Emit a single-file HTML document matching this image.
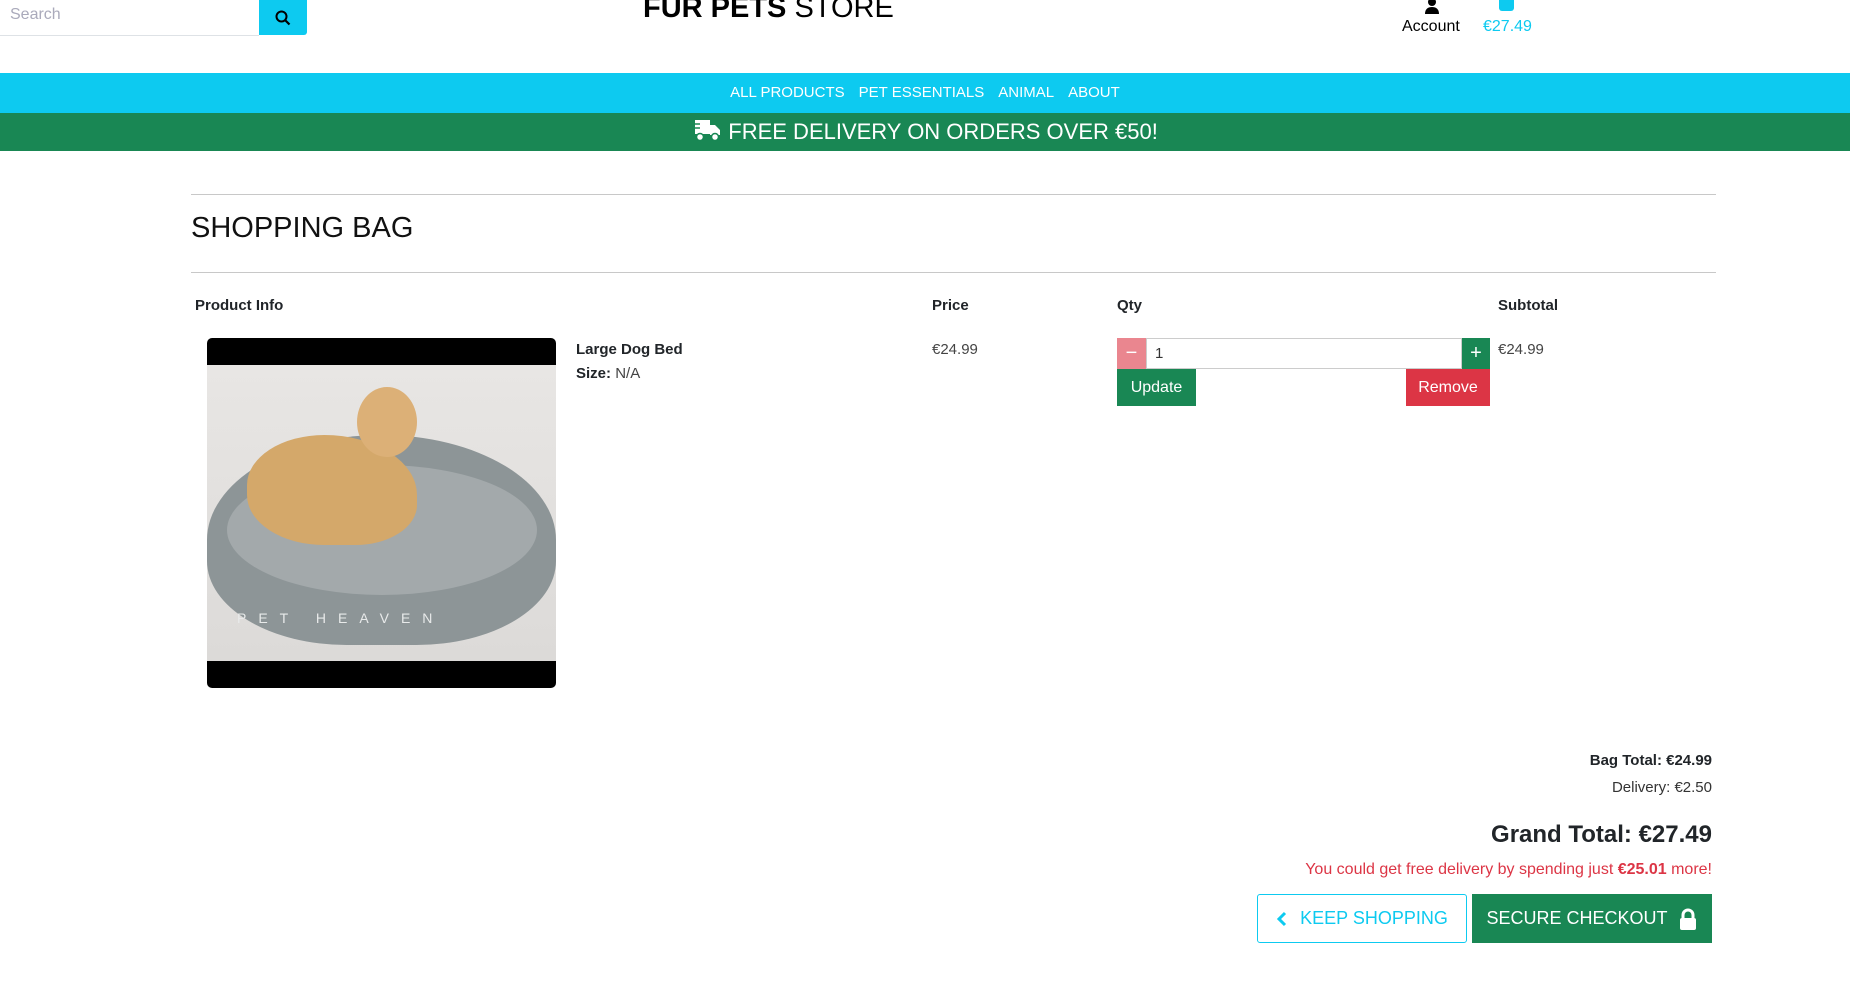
<!DOCTYPE html>
<html><head><meta charset="utf-8"><style>
*{box-sizing:border-box;margin:0;padding:0}
body{width:1850px;height:982px;overflow:hidden;background:#fff;font-family:"Liberation Sans",sans-serif;color:#212529;position:relative}
.a{position:absolute}
.btn{position:absolute;display:flex;align-items:center;justify-content:center;color:#fff}
</style></head><body>
<div class="a" style="left:0;top:0;width:259px;height:36px;border-bottom:1px solid #dee2e6;font-size:16px;color:#aab;padding:6px 10px">Search</div>
<div class="btn" style="left:259px;top:0;width:48px;height:35px;background:#0dcaf0;border-radius:0 0 3px 0">
<svg width="16" height="16" viewBox="0 0 16 16"><circle cx="6.5" cy="6.5" r="5" fill="none" stroke="#000" stroke-width="2"/><path d="M10 10l4.5 4.5" stroke="#000" stroke-width="2.2"/></svg></div>
<div class="a" style="left:643px;top:-8px;font-size:29px;color:#000;white-space:nowrap"><b>FUR PETS</b> STORE</div>
<svg class="a" style="left:1423px;top:0" width="18" height="14" viewBox="0 0 18 14"><circle cx="9" cy="2" r="4"/><path d="M2 14c0-5 3-7 7-7s7 2 7 7z"/></svg>
<div class="a" style="left:1402px;top:18px;font-size:16px;color:#000">Account</div>
<div class="a" style="left:1499px;top:0;width:15px;height:11px;background:#0dcaf0;border-radius:0 0 3px 3px"></div>
<div class="a" style="left:1483px;top:18px;font-size:16px;color:#0dcaf0">€27.49</div>
<div class="a" style="left:0;top:73px;width:1850px;height:40px;background:#0dcaf0;color:#fff;font-size:15px;text-align:center;line-height:40px"><span style="margin:0 7px">ALL PRODUCTS</span><span style="margin:0 7px">PET ESSENTIALS</span><span style="margin:0 7px">ANIMAL</span><span style="margin:0 7px">ABOUT</span></div>
<div class="a" style="left:0;top:113px;width:1850px;height:38px;background:#198754;color:#fff;font-size:22px;text-align:center;line-height:38px">
<svg width="30" height="24" viewBox="0 0 30 24" style="vertical-align:-3px"><path d="M3 2h15v14H3zM18 7h5l5 5v5H18z" fill="#fff"/><circle cx="8" cy="19" r="3.5" fill="#fff" stroke="#198754" stroke-width="1.5"/><circle cx="23" cy="19" r="3.5" fill="#fff" stroke="#198754" stroke-width="1.5"/><path d="M0 6h8M0 10h8" stroke="#198754" stroke-width="1.5"/></svg> FREE DELIVERY ON ORDERS OVER €50!</div>
<div class="a" style="left:191px;top:194px;width:1525px;height:1px;background:#c8c8c8"></div>
<div class="a" style="left:191px;top:212px;font-size:29px;color:#111">SHOPPING BAG</div>
<div class="a" style="left:191px;top:272px;width:1525px;height:1px;background:#c8c8c8"></div>
<div class="a" style="left:195px;top:297px;font-size:15px;font-weight:bold">Product Info</div>
<div class="a" style="left:932px;top:297px;font-size:15px;font-weight:bold">Price</div>
<div class="a" style="left:1117px;top:297px;font-size:15px;font-weight:bold">Qty</div>
<div class="a" style="left:1498px;top:297px;font-size:15px;font-weight:bold">Subtotal</div>
<div class="a" style="left:207px;top:338px;width:349px;height:350px;background:#000;border-radius:5px;overflow:hidden">
<div class="a" style="left:0;top:27px;width:349px;height:296px;background:linear-gradient(#e8e6e4,#dcdad8)">
<div class="a" style="left:0;top:70px;width:349px;height:210px;border-radius:50% 50% 40% 40%;background:#8d9597"></div>
<div class="a" style="left:20px;top:100px;width:310px;height:130px;border-radius:50%;background:#a3a9ab"></div>
<div class="a" style="left:40px;top:70px;width:170px;height:110px;border-radius:50% 60% 40% 50%;background:#d4a86a"></div>
<div class="a" style="left:150px;top:22px;width:60px;height:70px;border-radius:50%;background:#dcb077"></div>
<div class="a" style="left:30px;top:245px;font-size:14px;color:#e8eaea;letter-spacing:12px">PET HEAVEN</div>
</div></div>
<div class="a" style="left:576px;top:341px;font-size:15px;font-weight:bold">Large Dog Bed</div>
<div class="a" style="left:576px;top:365px;font-size:15px"><b>Size:</b> <span style="color:#444">N/A</span></div>
<div class="a" style="left:932px;top:341px;font-size:15px;color:#444">€24.99</div>
<div class="btn" style="left:1117px;top:338px;width:29px;height:31px;background:#ea868f;font-size:20px">−</div>
<div class="a" style="left:1146px;top:338px;width:316px;height:31px;border:1px solid #ccc;font-size:15px;padding:6px 8px;color:#333">1</div>
<div class="btn" style="left:1462px;top:338px;width:28px;height:31px;background:#198754;font-size:20px">+</div>
<div class="btn" style="left:1117px;top:369px;width:79px;height:37px;background:#198754;font-size:16px">Update</div>
<div class="btn" style="left:1406px;top:369px;width:84px;height:37px;background:#dc3545;font-size:16px">Remove</div>
<div class="a" style="left:1498px;top:341px;font-size:15px;color:#444">€24.99</div>
<div class="a" style="right:138px;top:752px;font-size:15px;font-weight:bold">Bag Total: €24.99</div>
<div class="a" style="right:138px;top:779px;font-size:15px;color:#333">Delivery: €2.50</div>
<div class="a" style="right:138px;top:821px;font-size:24px;font-weight:bold">Grand Total: €27.49</div>
<div class="a" style="right:138px;top:861px;font-size:16px;color:#dc3545">You could get free delivery by spending just <b>€25.01</b> more!</div>
<div class="btn" style="left:1257px;top:894px;width:210px;height:49px;border:1px solid #0dcaf0;border-radius:3px;color:#0dcaf0;font-size:18px"><svg width="12" height="16" viewBox="0 0 12 16" style="margin-right:12px"><path d="M9 2L3 8l6 6" fill="none" stroke="#0dcaf0" stroke-width="3"/></svg>KEEP SHOPPING</div>
<div class="btn" style="left:1472px;top:894px;width:240px;height:49px;background:#198754;font-size:18px">SECURE CHECKOUT
<svg width="20" height="22" viewBox="0 0 20 22" style="margin-left:10px"><path d="M5 10V7a5 5 0 0 1 10 0v3" fill="none" stroke="#fff" stroke-width="3"/><rect x="2" y="10" width="16" height="12" rx="2" fill="#fff"/></svg></div>
</body></html>
